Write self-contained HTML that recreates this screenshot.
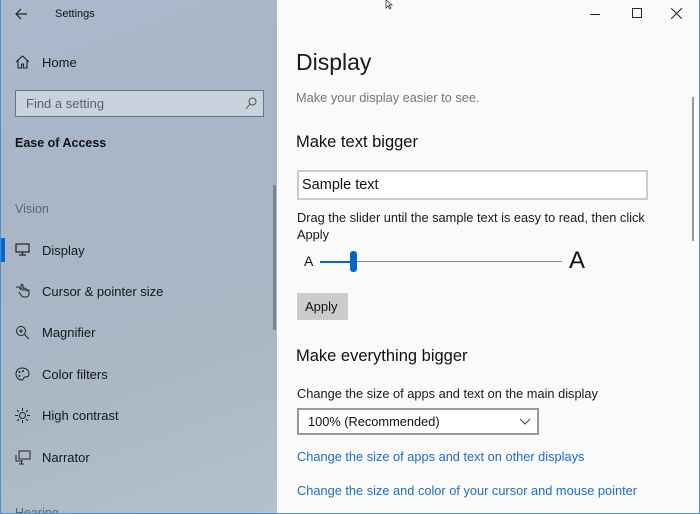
<!DOCTYPE html>
<html><head><meta charset="utf-8"><style>
*{margin:0;padding:0;box-sizing:border-box}
body{width:700px;height:514px;overflow:hidden;font-family:"Liberation Sans",sans-serif;position:relative;background:#fbfbfb}
.side{position:absolute;left:0;top:0;width:277px;height:514px;overflow:hidden;background:linear-gradient(160deg,#a9b9cb 0%,#a8b6c6 40%,#aab8c6 70%,#b3c0ce 100%);border-left:1px solid #4a8fd6;border-bottom:1px solid #4a8fd6}
.t{position:absolute;white-space:nowrap;color:#111}
.main{position:absolute;left:277px;top:0;width:423px;height:514px;background:#fafafa;border-right:1px solid #4a8fd6;border-bottom:1px solid #4a8fd6}
.nav{font-size:13px;color:#161616}
.ic{position:absolute;left:14px}
.link{color:#1b6fbf;font-size:12.8px}
</style></head><body>
<div class="side">
<svg class="ic" style="left:13px;top:8px" width="14" height="12"><path d="M13 6H2M7 1L2 6l5 5" stroke="#222" fill="none" stroke-width="1.2"/></svg>
<div class="t" style="left:54px;top:8px;font-size:11px">Settings</div>
<svg class="ic" style="top:55px" width="15" height="14"><path d="M1 7L7.5 1 14 7M3 5.5V13h3.5V9h2v4H12V5.5" stroke="#222" fill="none" stroke-width="1.1"/></svg>
<div class="t nav" style="left:41px;top:55px">Home</div>
<div style="position:absolute;left:14px;top:90px;width:249px;height:27px;border:1.5px solid #6d747c;background:#c9d3de"></div>
<div class="t" style="left:25px;top:96px;font-size:13px;color:#5a6068">Find a setting</div>
<svg style="position:absolute;left:244px;top:97px" width="12" height="13"><circle cx="7.5" cy="4.5" r="3.5" stroke="#555" fill="none"/><path d="M5 7L1 12" stroke="#555"/></svg>
<div class="t" style="left:14px;top:136px;font-size:12.5px;font-weight:bold;color:#111">Ease of Access</div>
<div class="t" style="left:14px;top:202px;font-size:12.5px;color:#5d6670">Vision</div>
<div style="position:absolute;left:0;top:238px;width:4px;height:24px;background:#0a64c8"></div>
<svg class="ic" style="top:243px" width="15" height="13"><rect x="1" y="1" width="13" height="8" stroke="#222" fill="none" stroke-width="1.2"/><path d="M7.5 9v3M4 12h7" stroke="#222" stroke-width="1.2"/></svg>
<div class="t nav" style="left:41px;top:243px">Display</div>
<svg class="ic" style="top:284px" width="16" height="14"><path d="M1 3h3l2 3M6 6V1.5a1 1 0 0 1 2 0V7M8 5a1 1 0 0 1 2 0v2M10 6a1 1 0 0 1 2 0v1.5M12 7a1 1 0 0 1 2 0v3c0 2-1 3-3 3H9c-1.5 0-2.5-1-3.5-2.5L4 8" stroke="#222" fill="none"/></svg>
<div class="t nav" style="left:41px;top:284px">Cursor &amp; pointer size</div>
<svg class="ic" style="top:325px" width="15" height="15"><circle cx="6" cy="6" r="4.5" stroke="#222" fill="none"/><path d="M9.5 9.5L14 14M4 6h4M6 4v4" stroke="#222"/></svg>
<div class="t nav" style="left:41px;top:325px">Magnifier</div>
<svg class="ic" style="top:367px" width="15" height="14"><path d="M7 1C3 1 1 4 1 7c0 4 3 6 6 6 2 0 1-3 3-3s4 0 4-3C14 3 11 1 7 1z" stroke="#222" fill="none"/><circle cx="4.5" cy="5" r="1" fill="#222"/><circle cx="8" cy="4" r="1" fill="#222"/><circle cx="4.5" cy="9" r="1" fill="#222"/></svg>
<div class="t nav" style="left:41px;top:367px">Color filters</div>
<svg class="ic" style="top:408px" width="15" height="15"><circle cx="7.5" cy="7.5" r="3" stroke="#222" fill="none"/><path d="M7.5 0v3M7.5 12v3M0 7.5h3M12 7.5h3M2 2l2 2M11 11l2 2M13 2l-2 2M4 11l-2 2" stroke="#222"/></svg>
<div class="t nav" style="left:41px;top:408px">High contrast</div>
<svg class="ic" style="top:450px" width="16" height="15"><rect x="4" y="1" width="11" height="8" stroke="#222" fill="none"/><path d="M1 5v6h7M4 14h5M6.5 11v3" stroke="#222" fill="none"/></svg>
<div class="t nav" style="left:41px;top:450px">Narrator</div>
<div class="t" style="left:14px;top:506px;font-size:12.5px;color:#5d6670">Hearing</div>
<div style="position:absolute;left:272px;top:185px;width:3px;height:145px;background:#7b858f"></div>
</div>
<div class="main">
<svg style="position:absolute;left:108px;top:0" width="10" height="10"><path d="M1 0v8l2-2 2 3 1-1-2-3h3z" fill="#fff" stroke="#333" stroke-width=".8"/></svg>
<div style="position:absolute;left:313px;top:14px;width:10px;height:1px;background:#222"></div>
<div style="position:absolute;left:355px;top:8px;width:10px;height:10px;border:1px solid #222"></div>
<svg style="position:absolute;left:394px;top:8px" width="11" height="11"><path d="M0 0l11 11M11 0L0 11" stroke="#222"/></svg>
<div class="t" style="left:19px;top:49px;font-size:23px;color:#1a1a1a;font-weight:300">Display</div>
<div class="t" style="left:19px;top:90px;font-size:12.8px;color:#777">Make your display easier to see.</div>
<div class="t" style="left:19px;top:133px;font-size:16.5px;color:#111">Make text bigger</div>
<div style="position:absolute;left:20px;top:170px;width:351px;height:30px;border:2px solid #ccc;background:#fff"></div>
<div class="t" style="left:25px;top:177px;font-size:14.5px">Sample text</div>
<div class="t" style="left:20px;top:209px;font-size:12.8px;line-height:17px;color:#1a1a1a">Drag the slider until the sample text is easy to read, then click<br>Apply</div>
<div class="t" style="left:27px;top:253px;font-size:14px">A</div>
<div style="position:absolute;left:43px;top:261px;width:32px;height:2px;background:#0a64c8"></div>
<div style="position:absolute;left:75px;top:261px;width:210px;height:1px;background:#888"></div>
<div style="position:absolute;left:73px;top:251px;width:7px;height:21px;border-radius:3px;background:#0a64c8"></div>
<div class="t" style="left:292px;top:247px;font-size:24px">A</div>
<div style="position:absolute;left:20px;top:293px;width:51px;height:27px;background:#ccc"></div>
<div class="t" style="left:28px;top:299px;font-size:13px">Apply</div>
<div class="t" style="left:19px;top:347px;font-size:16.5px;color:#111">Make everything bigger</div>
<div class="t" style="left:20px;top:386px;font-size:12.8px;color:#1a1a1a">Change the size of apps and text on the main display</div>
<div style="position:absolute;left:20px;top:408px;width:242px;height:27px;border:2px solid #999;background:#fff"></div>
<div class="t" style="left:31px;top:414px;font-size:12.8px">100% (Recommended)</div>
<svg style="position:absolute;left:242px;top:418px" width="12" height="7"><path d="M1 1l5 5 5-5" stroke="#444" fill="none"/></svg>
<div class="t link" style="left:20px;top:449px">Change the size of apps and text on other displays</div>
<div class="t link" style="left:20px;top:483px">Change the size and color of your cursor and mouse pointer</div>
<div style="position:absolute;left:415px;top:97px;width:2px;height:144px;background:#999"></div>
</div>
</body></html>
